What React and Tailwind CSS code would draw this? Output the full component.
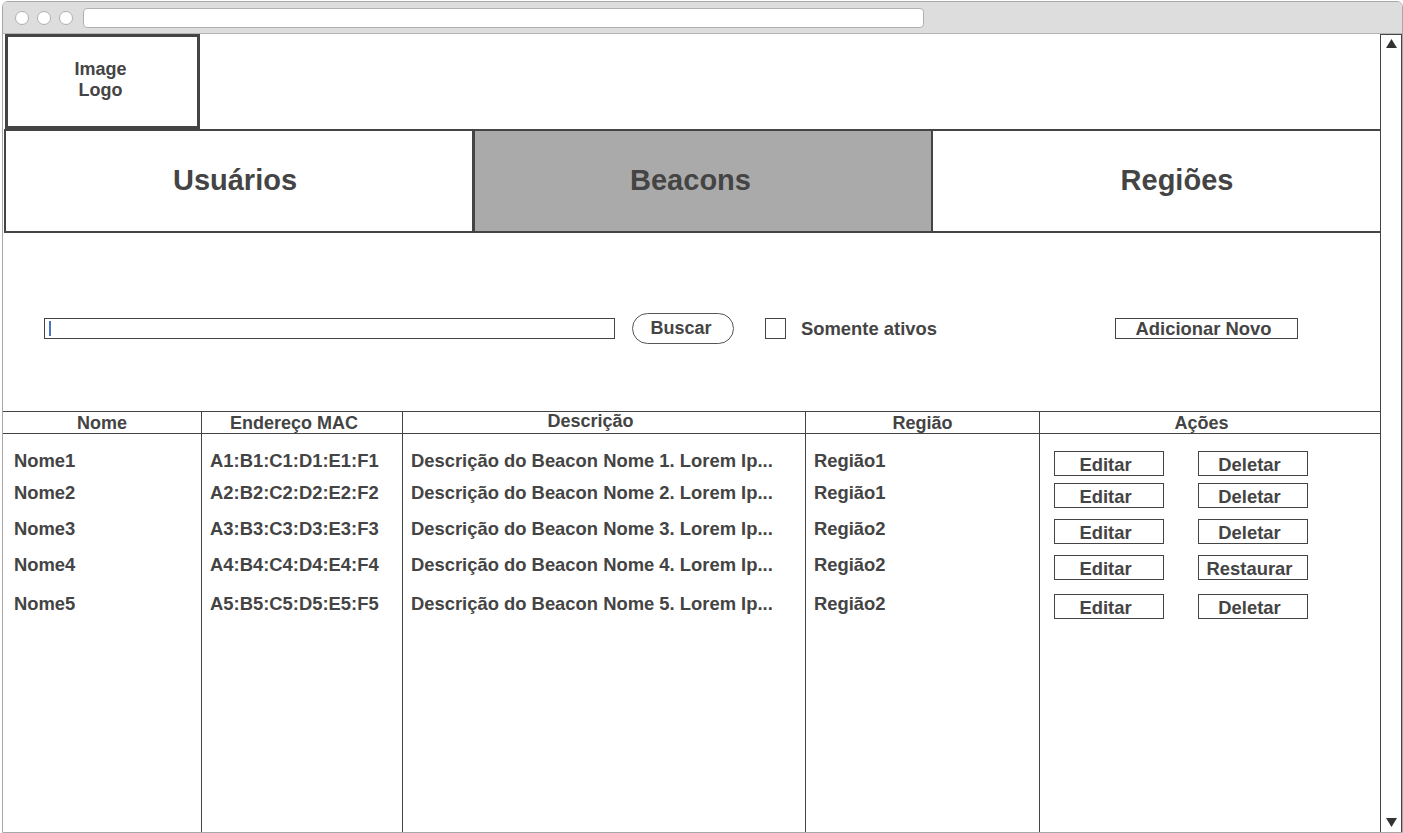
import React from 'react';

const rows = [
  { nome: 'Nome1', mac: 'A1:B1:C1:D1:E1:F1', desc: 'Descrição do Beacon Nome 1. Lorem Ip...', regiao: 'Região1', acao: 'Deletar', gap: 'mt-[17px]' },
  { nome: 'Nome2', mac: 'A2:B2:C2:D2:E2:F2', desc: 'Descrição do Beacon Nome 2. Lorem Ip...', regiao: 'Região1', acao: 'Deletar', gap: 'mt-[8px]' },
  { nome: 'Nome3', mac: 'A3:B3:C3:D3:E3:F3', desc: 'Descrição do Beacon Nome 3. Lorem Ip...', regiao: 'Região2', acao: 'Deletar', gap: 'mt-[12px]' },
  { nome: 'Nome4', mac: 'A4:B4:C4:D4:E4:F4', desc: 'Descrição do Beacon Nome 4. Lorem Ip...', regiao: 'Região2', acao: 'Restaurar', gap: 'mt-[12px]' },
  { nome: 'Nome5', mac: 'A5:B5:C5:D5:E5:F5', desc: 'Descrição do Beacon Nome 5. Lorem Ip...', regiao: 'Região2', acao: 'Deletar', gap: 'mt-[15px]' },
];

// one body column, full height, with a right rule
const Col = ({ width, pad, field }) => (
  <div className={`${width} border-r border-[#444] h-full flex flex-col`}>
    {rows.map((r) => (
      <div key={r.nome} className={`${r.gap} h-[24px] ${pad} leading-[20px] whitespace-nowrap text-[18.4px]`}>
        {r[field]}
      </div>
    ))}
  </div>
);

const Btn = ({ children }) => (
  <div className="w-[110px] h-[25px] border border-[#444] flex items-center justify-center pt-[2px] pr-[7px] leading-[20px] text-[18.4px]">
    {children}
  </div>
);

export default function App() {
  return (
    <div className="w-[1403px] h-[833px] overflow-hidden bg-white pt-px pl-[2px] font-['Liberation_Sans',Arial,sans-serif] font-bold text-[18px] text-[#444]">
      <div className="w-[1401px] h-[832px] border border-[#a8a8a8] rounded-t-[6px] overflow-hidden flex flex-col">
        {/* browser bar */}
        <div className="h-[32px] shrink-0 bg-[#dddddd] border-b border-[#b5b5b5] flex items-center pl-[12px]">
          <div className="flex gap-[8px]">
            <span className="w-[14px] h-[14px] rounded-full bg-white border border-[#b0b0b0]" />
            <span className="w-[14px] h-[14px] rounded-full bg-white border border-[#b0b0b0]" />
            <span className="w-[14px] h-[14px] rounded-full bg-white border border-[#b0b0b0]" />
          </div>
          <div className="ml-[10px] w-[841px] h-[20px] bg-white border border-[#b0b0b0] rounded-[4px]" />
        </div>

        <div className="flex-1 flex min-h-0">
          {/* page */}
          <div className="w-[1377px] flex flex-col">
            <div className="h-[95px] w-[195px] ml-[2px] shrink-0 border-[3px] border-[#444] flex items-center justify-center text-center leading-[21px] pb-[3px] pr-[4px]">
              Image
              <br />
              Logo
            </div>

            <div className="h-[104px] ml-px shrink-0 border-2 border-r-0 border-[#444] flex text-[29px]">
              <div className="w-[469px] border-r-[3px] border-[#444] flex items-center justify-center pr-[8px]">Usuários</div>
              <div className="w-[458px] border-r-2 border-[#444] bg-[#aaaaaa] flex items-center justify-center pr-[25px]">Beacons</div>
              <div className="flex-1 flex items-center justify-center pl-[41px]">Regiões</div>
            </div>

            <div className="h-[178px] shrink-0 pt-[80px] pl-[41px] flex items-start">
              <div className="w-[1071px] h-[31px] flex items-center">
                <div className="w-[571px] h-[21px] border border-[#444] flex items-center">
                  <span className="ml-[4px] w-[2px] h-[15px] bg-[#4a74c9]" />
                </div>
                <div className="ml-[17px] w-[102px] h-[31px] rounded-full border border-[#555] flex items-center justify-center pr-[4px]">
                  Buscar
                </div>
                <div className="ml-[31px] w-[21px] h-[21px] border border-[#444]" />
                <span className="ml-[15px] text-[18.4px]">Somente ativos</span>
              </div>
              <div className="mt-[5px] w-[183px] h-[21px] border border-[#444] flex items-center justify-center leading-[20px] text-[18.4px] pr-[6px]">
                Adicionar Novo
              </div>
            </div>

            {/* table */}
            <div className="flex-1 flex flex-col min-h-0">
              <div className="h-[23px] shrink-0 border-y border-[#444] flex text-center leading-[20px]">
                <div className="w-[199px] border-r border-[#444] flex items-center justify-center">Nome</div>
                <div className="w-[201px] border-r border-[#444] flex items-center justify-center pr-[16px]">Endereço MAC</div>
                <div className="w-[403px] border-r border-[#444] flex items-center justify-center pr-[27px] pb-[4px]">Descrição</div>
                <div className="w-[234px] border-r border-[#444] flex items-center justify-center">Região</div>
                <div className="flex-1 flex items-center justify-center pr-[17px]">Ações</div>
              </div>
              <div className="flex-1 flex">
                <Col width="w-[199px]" pad="pl-[11px]" field="nome" />
                <Col width="w-[201px]" pad="pl-[8px]" field="mac" />
                <Col width="w-[403px]" pad="pl-[8px]" field="desc" />
                <Col width="w-[234px]" pad="pl-[8px]" field="regiao" />
                <div className="flex-1 flex flex-col">
                  {rows.map((r) => (
                    <div key={r.nome} className={`${r.gap} h-[24px] flex pl-[14px] gap-[34px]`}>
                      <Btn>Editar</Btn>
                      <Btn>{r.acao}</Btn>
                    </div>
                  ))}
                </div>
              </div>
            </div>
          </div>

          {/* scrollbar */}
          <div className="w-[22px] border-x border-t border-[#444] flex flex-col items-center justify-between pt-[4px] pb-[5px]">
            <svg width="11" height="9" viewBox="0 0 11 9">
              <path d="M5.5 0 L11 9 L0 9 Z" fill="#333" />
            </svg>
            <svg width="11" height="9" viewBox="0 0 11 9">
              <path d="M0 0 L11 0 L5.5 9 Z" fill="#333" />
            </svg>
          </div>
        </div>
      </div>
    </div>
  );
}
